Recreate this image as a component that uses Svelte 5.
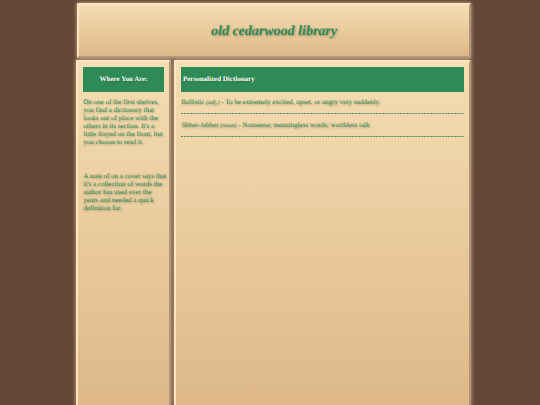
<script>
  const location = [
    "On one of the first shelves,\nyou find a dictionary that\nlooks out of place with the\nothers in its section. It's a\nlittle frayed on the front, but\nyou choose to read it.",
    "A note of on a cover says that\nit's a collection of words the\nauthor has used over the\nyears and needed a quick\ndefinition for.",
  ];

  const entries = [
    { word: 'Ballistic', kind: 'adj.', meaning: 'To be extremely excited, upset, or angry very suddenly.' },
    { word: 'Jibber-Jabber', kind: 'noun', meaning: 'Nonsense; meaningless words; worthless talk' },
  ];
</script>

<div class="page">
  <header class="panel">
    <h1>old cedarwood library</h1>
  </header>
  <div class="columns">
    <aside class="panel">
      <h2 class="centered">Where You Are:</h2>
      {#each location as paragraph}
        <p>{paragraph}</p>
      {/each}
    </aside>
    <main class="panel">
      <h2>Personalized Dictionary</h2>
      <dl>
        {#each entries as entry}
          <div class="entry">
            <dt>{entry.word} <em>({entry.kind})</em></dt>
            <dd>- {entry.meaning}</dd>
          </div>
        {/each}
      </dl>
    </main>
  </div>
</div>

<style>
  :global(body) {
    padding-left: 7px;
    background: #664737;
  }

  .page {
    box-sizing: border-box;
    display: flex;
    flex-direction: column;
    gap: 2px;
    width: 74%;
    min-height: 100vh;
    margin: 0 auto;
    padding-top: 3px;
    color: #2e8b57;
    font-family: "Liberation Serif", "Times New Roman", serif;
    font-size: 7px;
    line-height: 8px;
    text-rendering: geometricPrecision;
    text-shadow: 1px 1px 2px rgba(70, 90, 50, 0.5);
  }

  .panel {
    box-sizing: border-box;
    border: 2px solid;
    border-color: #ffe4c4 #b0957c #b0957c #ffe4c4;
    background: linear-gradient(#f5deb3, #deb887);
    box-shadow: 0 0 4px #d2b48c;
  }

  header {
    display: flex;
    align-items: center;
    justify-content: center;
    height: 55px;
    margin-left: 1px;
    padding-top: 2px;
  }

  h1 {
    margin: 0;
    font-size: 14px;
    font-style: italic;
    line-height: 16px;
  }

  .columns {
    display: flex;
    flex: 1;
    gap: 3px;
  }

  .columns > .panel {
    min-width: 0;
    padding: 5px 5px 0;
    border-bottom: 0;
  }

  aside {
    flex: 0 0 24%;
  }

  main {
    flex: 1;
  }

  h2 {
    margin: 0 0 6px;
    padding: 8px 2px;
    background: #2e8b57;
    color: #fff;
    font-size: 7px;
    line-height: 9px;
  }

  .centered {
    text-align: center;
  }

  p {
    margin: 0 0 26px;
    white-space: pre;
  }

  dl,
  dd {
    margin: 0;
  }

  .entry {
    display: flex;
    gap: 2px;
    padding-bottom: 7px;
    margin-bottom: 7px;
    background: repeating-linear-gradient(90deg, #5b9867 0 2px, #b5bd8c 2px 3px) left bottom / 100% 1px no-repeat;
  }

  em {
    font-size: 6px;
  }
</style>
